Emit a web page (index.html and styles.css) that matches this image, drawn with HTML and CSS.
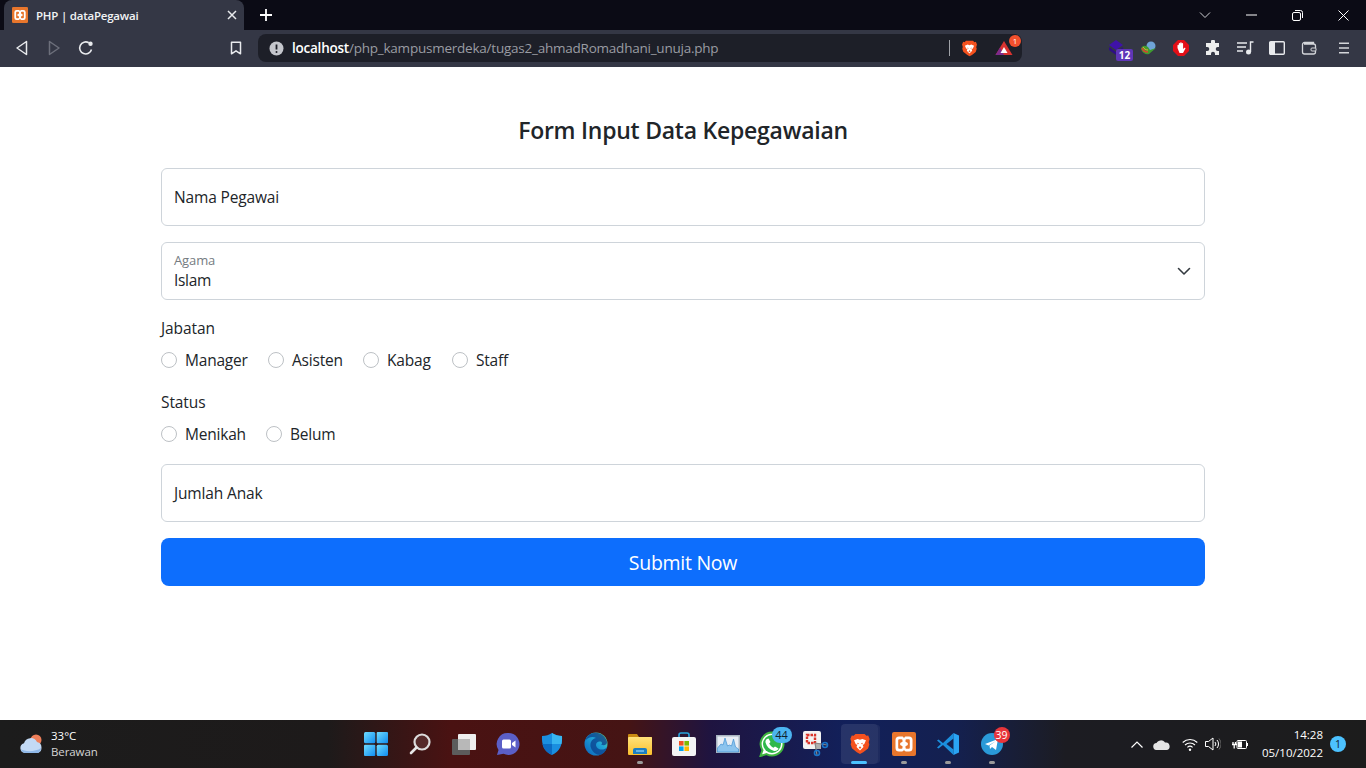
FILE: index.html
```html
<!DOCTYPE html>
<html lang="id">
<head>
<meta charset="utf-8">
<title>PHP | dataPegawai</title>
<link rel="stylesheet" href="styles.css">
</head>
<body>
<svg class="defs" aria-hidden="true">
  <defs>
    <linearGradient id="win" x1="0" y1="0" x2="1" y2="1"><stop offset="0" stop-color="#6fdcff"/><stop offset="1" stop-color="#0f8cf0"/></linearGradient>
    <linearGradient id="edge" x1="0" y1="1" x2="1" y2="0"><stop offset="0" stop-color="#0c5fb8"/><stop offset=".6" stop-color="#1fa6d8"/><stop offset="1" stop-color="#7fe06a"/></linearGradient>
    <linearGradient id="folder" x1="0" y1="0" x2="0" y2="1"><stop offset="0" stop-color="#ffe27a"/><stop offset="1" stop-color="#fbc02d"/></linearGradient>
    <symbol id="xampp" viewBox="0 0 24 24">
      <rect width="24" height="24" rx="2" fill="#e8762c"/>
      <path d="M3.500 8a3.500 3.500 0 0 1 3.500-3.500h3c1 0 1.500.7 2 1.700.5-1 1-1.700 2-1.700h3A3.500 3.500 0 0 1 20.500 8v8a3.500 3.500 0 0 1-3.500 3.500h-3c-1 0-1.500-.7-2-1.700-.5 1-1 1.700-2 1.700H7A3.500 3.500 0 0 1 3.500 16z" fill="#fff"/>
      <path d="M7.200 7.300h2.300a1 1 0 0 1 1 1v1.400l-2.300 1.200v2.200l2.300 1.200v1.400a1 1 0 0 1-1 1H7.200a1 1 0 0 1-1-1V8.300a1 1 0 0 1 1-1z" fill="#e8762c"/>
      <path d="M16.800 7.300h-2.300a1 1 0 0 0-1 1v1.400l2.300 1.200v2.200l-2.300 1.200v1.400a1 1 0 0 0 1 1h2.300a1 1 0 0 0 1-1V8.300a1 1 0 0 0-1-1z" fill="#e8762c"/>
    </symbol>
    <symbol id="brave" viewBox="0 0 24 24">
      <path d="M7 1h10l2 2 2-.4 1.500 3.900-1 3.600.7 2.400-1.400 4.300-5.300 4.300L12 23l-3.500-2.100-5.300-4.300-1.400-4.300.7-2.400-1-3.600L3 2.600 5 3z" fill="#f4511e"/>
      <path d="M5.500 8l4-1.500L12 7.300l2.500-.8 4 1.500-1.800 4-1.700 1 .8 2.200L12 19l-3.800-3.800.8-2.200-1.700-1z" fill="#fff"/>
      <path d="M9 10.500l2 1-1.500 1zM15 10.500l-2 1 1.500 1zM10.500 16l1.500-1.500 1.500 1.500-1.500 1.200z" fill="#f4511e"/>
    </symbol>
  </defs>
</svg>

<header class="browser">
  <div class="tabstrip">
    <div class="tab">
      <svg class="favicon"><use href="#xampp"/></svg>
      <span class="tab-title">PHP | dataPegawai</span>
      <svg class="tab-close" viewBox="0 0 10 10"><path d="M1 1l8 8M9 1l-8 8" stroke="#e8eaed" stroke-width="1.500"/></svg>
    </div>
    <svg class="tab-new" viewBox="0 0 12 12"><path d="M6 0v12M0 6h12" stroke="#fff" stroke-width="1.800"/></svg>
    <div class="fill"></div>
    <div class="winbtn"><svg width="12" height="8" viewBox="0 0 12 8"><path d="M1 1.500l5 5 5-5" fill="none" stroke="#cfd0d4"/></svg></div>
    <div class="winbtn"><svg width="11" height="2" viewBox="0 0 11 2"><path d="M0 1h11" stroke="#fff"/></svg></div>
    <div class="winbtn"><svg width="11" height="11" viewBox="0 0 11 11"><rect x=".5" y="2.500" width="8" height="8" rx="1.500" fill="none" stroke="#fff"/><path d="M3 .5h5.500a2 2 0 0 1 2 2V8" fill="none" stroke="#fff"/></svg></div>
    <div class="winbtn"><svg width="11" height="11" viewBox="0 0 11 11"><path d="M.5.500l10 10M10.500.500l-10 10" stroke="#fff"/></svg></div>
  </div>

  <div class="toolbar">
    <div class="navbtn"><svg width="14" height="16" viewBox="0 0 14 16"><path d="M11.500 1.500v13L2 8z" fill="none" stroke="#e8eaed" stroke-width="1.500" stroke-linejoin="round"/></svg></div>
    <div class="navbtn"><svg width="14" height="16" viewBox="0 0 14 16"><path d="M2.500 1.500v13L12 8z" fill="none" stroke="#6c6f7b" stroke-width="1.500" stroke-linejoin="round"/></svg></div>
    <div class="navbtn"><svg width="16" height="16" viewBox="0 0 16 16"><path d="M13.500 9.500A6 6 0 1 1 10.800 2.800" fill="none" stroke="#e8eaed" stroke-width="1.600"/><circle cx="12.500" cy="3.800" r="2.200" fill="#e8eaed"/></svg></div>
    <div class="fill"></div>
    <div class="navbtn"><svg width="12" height="14" viewBox="0 0 12 14"><path d="M1.500 1.200h9v11.600L6 9.800l-4.500 3z" fill="none" stroke="#e8eaed" stroke-width="1.500" stroke-linejoin="round"/></svg></div>
    <div class="urlbar">
      <svg class="url-info" width="15" height="15" viewBox="0 0 15 15"><circle cx="7.500" cy="7.500" r="7" fill="#c4c6cc"/><path d="M7.500 3.500v5" stroke="#1d1f28" stroke-width="1.800"/><circle cx="7.500" cy="11" r="1" fill="#1d1f28"/></svg>
      <span class="url"><b>localhost</b>/php_kampusmerdeka/tugas2_ahmadRomadhani_unuja.php</span>
      <div class="fill"></div>
      <span class="url-sep"></span>
      <svg class="url-brave"><use href="#brave"/></svg>
      <span class="url-rewards">
        <svg width="18" height="16" viewBox="0 0 18 16"><path d="M9 1l8.500 14H.5z" fill="#d9332f"/><path d="M.5 15L5 7.500 9 15z" fill="#7c2a8c"/><path d="M9 7l3.500 6h-7z" fill="#fff"/></svg>
        <span class="rewards-badge">1</span>
      </span>
    </div>
    <div class="exts">
      <div class="ext">
        <svg width="20" height="18" viewBox="0 0 20 18"><path d="M9 1l7 5-7 5-7-5z" fill="#3f12a8"/><path d="M2 8l7 5 7-5v3l-7 5-7-5z" fill="#2e0e86"/></svg>
        <span class="ext-count">12</span>
      </div>
      <div class="ext"><svg width="18" height="16" viewBox="0 0 18 16"><circle cx="11" cy="6" r="4.500" fill="#6fa4d8"/><path d="M1 9c1-4 4-4 7-2l2 3 6-2-7 6C6 15 2 13 1 9z" fill="#3e9b2f"/><path d="M2 8c1 3 4 4 6 4" fill="none" stroke="#d9442f" stroke-width="1.500"/><path d="M3 7c1 2 3 3 5 3" fill="none" stroke="#e8b12f" stroke-width="1"/></svg></div>
      <div class="ext"><svg width="16" height="16" viewBox="0 0 16 16"><path d="M5 0h6l5 5v6l-5 5H5l-5-5V5z" fill="#e20f17"/><path d="M4.500 8V5.500c0-1 1.300-1 1.300 0V3.800c0-1 1.400-1 1.400 0V3c0-1 1.500-1 1.500 0v.8c0-1 1.400-1 1.400 0V9l1-1c.8-.8 1.700 0 1.200.8L10 13H6.500z" fill="#fff"/></svg></div>
      <div class="ext"><svg width="16" height="16" viewBox="0 0 16 16"><path d="M6 1.500a2 2 0 0 1 4 0V3h4v4h-1.300a2 2 0 0 0 0 4H14v4h-4v-1.300a2 2 0 0 0-4 0V15H1v-4h1.300a2 2 0 0 0 0-4H1V3h5z" fill="#eceded"/></svg></div>
      <div class="ext"><svg width="17" height="14" viewBox="0 0 17 14"><path d="M0 2h10M0 6h9M0 10h6" stroke="#e8eaed" stroke-width="1.400"/><path d="M13.500 11V1h3" fill="none" stroke="#e8eaed" stroke-width="1.400"/><circle cx="11.500" cy="11" r="2.500" fill="#e8eaed"/></svg></div>
      <div class="ext"><svg width="16" height="14" viewBox="0 0 16 14"><rect x=".7" y=".7" width="14.600" height="12.600" rx="1" fill="none" stroke="#e8eaed" stroke-width="1.400"/><rect x="1" y="1" width="5" height="12" fill="#e8eaed"/></svg></div>
      <div class="ext"><svg width="16" height="14" viewBox="0 0 16 14"><path d="M12.500 3V1.500h-9a2 2 0 0 0-2 2V11a2 2 0 0 0 2 2h9a2 2 0 0 0 2-2V5a2 2 0 0 0-2-2H3" fill="none" stroke="#d4d6da" stroke-width="1.300"/><rect x="10" y="7" width="5" height="3" rx="1" fill="#343745" stroke="#d4d6da"/></svg></div>
      <div class="ext ext-menu"><svg width="10" height="12" viewBox="0 0 10 12"><path d="M0 1.200h10M0 6h10M0 10.800h10" stroke="#d4d6da" stroke-width="1.500"/></svg></div>
    </div>
  </div>
</header>

<main class="page">
  <form class="form">
    <h3 class="form-title">Form Input Data Kepegawaian</h3>

    <div class="field"><span class="field-text">Nama Pegawai</span></div>

    <div class="field select">
      <div class="select-body">
        <span class="float-label">Agama</span>
        <span class="select-value">Islam</span>
      </div>
      <svg width="16" height="16" viewBox="0 0 16 16"><path d="M2.500 5.500L8 11l5.500-5.500" fill="none" stroke="#343a40" stroke-width="1.600" stroke-linecap="round" stroke-linejoin="round"/></svg>
    </div>

    <div class="group">
      <div class="group-label">Jabatan</div>
      <div class="radios">
        <label class="radio r-manager"><span class="dot"></span>Manager</label>
        <label class="radio r-asisten"><span class="dot"></span>Asisten</label>
        <label class="radio r-kabag"><span class="dot"></span>Kabag</label>
        <label class="radio"><span class="dot"></span>Staff</label>
      </div>
    </div>

    <div class="group">
      <div class="group-label">Status</div>
      <div class="radios">
        <label class="radio r-menikah"><span class="dot"></span>Menikah</label>
        <label class="radio"><span class="dot"></span>Belum</label>
      </div>
    </div>

    <div class="field last"><span class="field-text">Jumlah Anak</span></div>

    <button class="submit" type="button">Submit Now</button>
  </form>
</main>

<footer class="taskbar">
  <div class="weather">
    <svg width="28" height="22" viewBox="0 0 28 22"><circle cx="17" cy="7" r="5.500" fill="#ee7f5a"/><path d="M6 20a5 5 0 0 1-1-9.800A7 7 0 0 1 18 9a5.500 5.500 0 0 1 4.500 5.500A5.500 5.500 0 0 1 19 20z" fill="#c3daf5"/><path d="M2 16c3 3 15 3 20-1a5.500 5.500 0 0 1-3 5H6a5 5 0 0 1-4-4z" fill="#8fb8e8"/></svg>
    <div class="weather-text"><span class="temp">33°C</span><span class="cond">Berawan</span></div>
  </div>

  <div class="apps">
    <div class="app"><svg width="24" height="24" viewBox="0 0 24 24"><rect width="11.300" height="11.300" rx="1.500" fill="url(#win)"/><rect x="12.700" width="11.300" height="11.300" rx="1" fill="url(#win)"/><rect y="12.700" width="11.300" height="11.300" rx="1" fill="url(#win)"/><rect x="12.700" y="12.700" width="11.300" height="11.300" rx="1.500" fill="url(#win)"/></svg></div>
    <div class="app"><svg width="22" height="22" viewBox="0 0 22 22"><circle cx="13" cy="9" r="7.500" fill="#5a3030" fill-opacity=".8" stroke="#dcdcdc" stroke-width="2.200"/><path d="M7.500 14.500L2 20" stroke="#e6e6e6" stroke-width="2.600" stroke-linecap="round"/></svg></div>
    <div class="app"><svg width="24" height="22" viewBox="0 0 24 22"><rect x="6" y="1" width="18" height="16" rx="1" fill="#eeeeee"/><rect y="6" width="18" height="16" rx="1" fill="#5c5c5c"/><rect x="6" y="6" width="12" height="11" fill="#b8b8b8"/></svg></div>
    <div class="app"><svg width="24" height="24" viewBox="0 0 24 24"><path d="M12.500 1a11 11 0 1 1-5 20.800L1 23l1.500-5A11 11 0 0 1 12.500 1z" fill="#5b5fc7"/><rect x="6" y="7.500" width="9" height="9" rx="1.500" fill="#fff"/><path d="M16 11l3.500-2.500v7L16 13z" fill="#fff"/></svg></div>
    <div class="app"><svg width="24" height="24" viewBox="0 0 24 24"><path d="M12 1c3 2 6 3 10 3 .5 9-2 15.500-10 19C4 19.500 1.500 13 2 4c4 0 7-1 10-3z" fill="#1a8fe0"/><path d="M12 1c3 2 6 3 10 3 .2 3 0 5.500-.5 8H12z" fill="#38b6f0"/><path d="M12 12H2.500c1 5 4 8.500 9.500 11z" fill="#0c6cc4"/></svg></div>
    <div class="app"><svg width="24" height="24" viewBox="0 0 24 24"><circle cx="12" cy="12" r="11.500" fill="url(#edge)"/><path d="M23 15c-2 3-6 3-8 2-4-1.500-4-7 0-7.500 3-.5 4 2 2 3 5 2 6-1 6-2.500C22 5 17 .8 12 .8 7 .8 2.500 4 1.500 8.500 4 5 9 4 12 6 7 7 5.500 12 7 16c1.500 4 5 7 9 7 3.500-1 6-4 7-8z" fill="#0b3f8c" fill-opacity=".75"/></svg></div>
    <div class="app"><svg width="24" height="22" viewBox="0 0 24 22"><path d="M0 2a1 1 0 0 1 1-1h8l2 3h13v4H0z" fill="#c98a12"/><rect y="4" width="24" height="18" rx="1" fill="url(#folder)"/><path d="M5 21v-4a2 2 0 0 1 2-2h10a2 2 0 0 1 2 2v4z" fill="#1c7ec2"/><path d="M8 18h8" stroke="#7cc6f0" stroke-width="1.500"/></svg><span class="run"></span></div>
    <div class="app"><svg width="24" height="24" viewBox="0 0 24 24"><path d="M7 6V3a2 2 0 0 1 2-2h6a2 2 0 0 1 2 2v3" fill="none" stroke="#29a3dc" stroke-width="1.600"/><rect y="5" width="24" height="19" rx="2" fill="#f4f4f4"/><rect x="7" y="9" width="4.600" height="4.600" fill="#f25022"/><rect x="12.400" y="9" width="4.600" height="4.600" fill="#7fba00"/><rect x="7" y="14.400" width="4.600" height="4.600" fill="#00a4ef"/><rect x="12.400" y="14.400" width="4.600" height="4.600" fill="#ffb900"/></svg></div>
    <div class="app"><svg width="24" height="18" viewBox="0 0 24 18"><rect width="24" height="18" fill="#a9b4c0"/><rect x="1.500" y="1.500" width="21" height="15" fill="#e8eef5"/><path d="M1.500 13L5 9l2 1 2-7 2.500 8 2-1 2 1 2-7 2 8 3 2v3h-21z" fill="#8cc4ee" stroke="#2f87cc" stroke-width=".6"/></svg></div>
    <div class="app"><svg width="26" height="26" viewBox="0 0 26 26"><path d="M13 1.500a11.500 11.500 0 1 1-5.500 21.600L1.500 25l2-5.800A11.500 11.500 0 0 1 13 1.500z" fill="#fff" stroke="#3fb43f" stroke-width="2"/><circle cx="13" cy="13" r="9" fill="#2fb84a"/><path d="M9.500 7.500l2 3.500-1.300 1.500c1 2 2.300 3.300 4.300 4.300l1.500-1.300 3.500 2c-.5 2-3 3-5 2.300-4-1.300-7-4.300-8-8.300-.3-1.800.5-3.500 3-4z" fill="#fff"/></svg><span class="badge badge-wa">44</span></div>
    <div class="app"><svg width="26" height="26" viewBox="0 0 26 26"><rect y="0" width="18" height="18" rx="2" fill="#f2f2f2"/><path d="M12 12h6v6h-6z" fill="#b0b0b0"/><rect x="4" y="4" width="8" height="8" fill="none" stroke="#d9342b" stroke-width="2.400" stroke-dasharray="2.500 1"/><path d="M12 12l12 2M12 12l2 12" stroke="#888" stroke-width="1.200"/><circle cx="22" cy="14" r="2.500" fill="none" stroke="#1a74c9" stroke-width="1.600"/><circle cx="14" cy="22" r="2.500" fill="none" stroke="#1a74c9" stroke-width="1.600"/></svg></div>
    <div class="app app-active"><svg width="22" height="24"><use href="#brave"/></svg><span class="run run-active"></span></div>
    <div class="app"><svg width="24" height="24"><use href="#xampp"/></svg><span class="run"></span></div>
    <div class="app"><svg width="24" height="24" viewBox="0 0 24 24"><path d="M17.500 1L7 11 2.500 7.500 1 8.500 5 12l-4 3.500 1.500 1L7 13l10.500 10v-5.500L10.500 12l7-5.500z" fill="#1b8fde"/><path d="M17.500 1L23 3.600v16.800L17.500 23z" fill="#2aa4f4"/></svg><span class="run"></span></div>
    <div class="app"><svg width="22" height="22" viewBox="0 0 22 22"><circle cx="11" cy="11" r="11" fill="#2a9ad8"/><path d="M4 11l13-5-2 11-4-3-2 2-.5-3.500L15 8l-7.500 4.500z" fill="#fff"/></svg><span class="badge badge-tg">39</span><span class="run"></span></div>
  </div>

  <div class="tray">
    <div class="tray-icons">
      <svg width="12" height="7" viewBox="0 0 12 7"><path d="M.5 6.500L6 1l5.500 5.500" fill="none" stroke="#fff" stroke-width="1.200"/></svg>
      <svg width="17" height="11" viewBox="0 0 17 11"><path d="M4 11a3.500 3.500 0 0 1-.5-7A5 5 0 0 1 12 3.500 3.800 3.800 0 0 1 13.500 11z" fill="#e5e5e5"/></svg>
      <svg class="tray-wifi" width="16" height="13" viewBox="0 0 16 13"><path d="M.7 4.500a10.500 10.500 0 0 1 14.600 0M3 7a7.200 7.200 0 0 1 10 0M5.400 9.400a3.800 3.800 0 0 1 5.200 0" fill="none" stroke="#fff" stroke-width="1.100"/><circle cx="8" cy="11.800" r="1.200" fill="#fff"/></svg>
      <svg class="tray-sound" width="16" height="14" viewBox="0 0 16 14"><path d="M.5 4.500h3L8 1v12L3.500 9.500h-3z" fill="none" stroke="#fff"/><path d="M10 5a3 3 0 0 1 0 4M12 3a6 6 0 0 1 0 8" fill="none" stroke="#fff"/><path d="M14 1.500a9 9 0 0 1 0 11" fill="none" stroke="#666"/></svg>
      <svg width="17" height="13" viewBox="0 0 17 13"><rect x="6" y="2.500" width="9.500" height="8" rx="1" fill="none" stroke="#fff"/><rect x="7" y="3.500" width="4" height="6" fill="#fff"/><rect x="15.500" y="5" width="1.500" height="3" fill="#fff"/><path d="M1 6.500h5M2 4v2.500M4.500 4v2.500M3.200 7v3.500" stroke="#fff" stroke-width="1.300"/></svg>
    </div>
    <div class="clock"><span>14:28</span><span>05/10/2022</span></div>
    <span class="notif">1</span>
  </div>
</footer>
</body>
</html>
```

FILE: styles.css
```css
* { box-sizing: border-box; }
html, body { margin: 0; height: 100%; }
body {
  display: flex;
  flex-direction: column;
  height: 768px;
  overflow: hidden;
  background: #fff;
  color: #212529;
  font-family: "Open Sans", "Noto Sans", sans-serif;
}
.defs { display: block; width: 0; height: 0; }
.fill { flex: 1; }

/* browser chrome */
.browser { flex: none; height: 67px; }
.tabstrip { display: flex; align-items: center; height: 30px; background: #0b0b15; padding-left: 4px; }
.tab {
  display: flex; align-items: center;
  width: 240px; height: 30px;
  padding: 0 7px 0 8px;
  background: #343745;
  border-radius: 8px 8px 0 0;
}
.favicon { width: 16px; height: 16px; flex: none; }
.tab-title { flex: 1; margin-left: 8px; color: #f1f3f4; font-size: 11.500px; font-weight: 600; letter-spacing: -.22px; }
.tab-close { width: 10px; height: 10px; flex: none; }
.tab-new { width: 12px; height: 12px; margin-left: 16px; }
.winbtn { display: flex; align-items: center; justify-content: center; width: 46px; height: 30px; }

.toolbar { display: flex; align-items: center; height: 37px; padding: 0 6px 1px 6px; background: #343745; }
.navbtn { display: flex; align-items: center; justify-content: center; width: 32px; height: 32px; }
.urlbar {
  display: flex; align-items: center;
  width: 764px; height: 28px;
  margin-left: 6px; padding-left: 11px;
  background: #1d1f28;
  border-radius: 8px;
}
.url { margin-left: 8px; color: #9a9ca3; font-size: 13.500px; letter-spacing: -.23px; white-space: nowrap; }
.url b { color: #fff; font-weight: 600; }
.url-sep { width: 1px; height: 16px; background: #a0a2a8; }
.url-brave { width: 17px; height: 19px; margin: 0 17px 0 11px; }
.url-rewards { position: relative; display: flex; margin-right: 9px; }
.rewards-badge {
  position: absolute; top: -5px; right: -8px;
  width: 12px; height: 12px;
  border-radius: 50%;
  background: #f1502d;
  color: #fff;
  font-size: 8px; line-height: 12px; text-align: center;
}
.exts { display: flex; align-items: center; margin-left: 79px; }
.ext { position: relative; display: flex; align-items: center; justify-content: center; width: 32px; height: 32px; }
.ext-menu { margin-left: 3px; }
.ext-count {
  position: absolute; left: 15px; top: 17px;
  width: 17px; height: 12px;
  background: #5f36b8;
  border-radius: 2px;
  color: #fff;
  font-size: 10px; font-weight: 700; line-height: 12px; text-align: center;
}

/* page */
.page { flex: 1; padding: 49px 161px 0; }
.form { display: flex; flex-direction: column; }
.form-title {
  margin: 0 0 23px;
  font-size: 23px; font-weight: 600; line-height: 29px;
  text-align: center;
  letter-spacing: -.25px;
}
.field {
  display: flex; align-items: center;
  height: 58px;
  margin-bottom: 16px;
  padding: 0 12px;
  border: 1px solid #ced4da;
  border-radius: 6px;
  font-size: 15.500px;
}
.field-text { letter-spacing: -.15px; }
.select { justify-content: space-between; }
.select-body { display: flex; flex-direction: column; padding-bottom: 1px; }
.float-label { color: #757b81; font-size: 13px; line-height: 18px; letter-spacing: -.12px; }
.select-value { font-size: 15.500px; line-height: 22px; letter-spacing: -.3px; }
.group { margin-bottom: 18px; }
.group-label { height: 24px; font-size: 15.500px; line-height: 24px; letter-spacing: -.1px; }
.radios { display: flex; margin-top: 8px; }
.radio { display: flex; align-items: center; height: 24px; font-size: 15.500px; letter-spacing: -.2px; }
.dot { width: 16px; height: 16px; margin-right: 8px; border: 1px solid #bdc1c5; border-radius: 50%; background: #fff; }
.r-manager { width: 107px; }
.r-asisten { width: 95px; }
.r-kabag { width: 89px; }
.r-menikah { width: 105px; }
.field.last { margin-bottom: 16px; }
.submit {
  height: 48px;
  border: 0;
  border-radius: 8px;
  background: #0d6efd;
  color: #fff;
  font: inherit;
  font-size: 19.500px;
  letter-spacing: -.28px;
}

/* taskbar */
.taskbar {
  flex: none;
  display: flex; align-items: center; justify-content: space-between;
  height: 48px;
  background: linear-gradient(90deg, #1c1c1c 0, #1d1a1a 24%, #4a1212 33%, #451414 46%, #1f1440 52%, #12205a 62%, #14204f 70%, #1c1c22 78%, #1c1c1c 100%);
}
.weather { display: flex; align-items: center; width: 353px; padding-left: 19px; }
.weather-text { display: flex; flex-direction: column; margin-left: 4px; font-size: 11.500px; line-height: 16px; }
.temp { color: #fff; }
.cond { color: #d4d4d4; letter-spacing: -.1px; }
.apps { display: flex; }
.app { position: relative; display: flex; align-items: center; justify-content: center; width: 44px; height: 48px; }
.app-active::before {
  content: ""; position: absolute; left: 3px; top: 4px;
  width: 37px; height: 40px;
  border-radius: 4px;
  background: rgba(255,255,255,.09);
  box-shadow: 3px 0 0 -1px rgba(255,255,255,.05);
}
.app-active svg { position: relative; }
.run { position: absolute; left: 19px; top: 41px; width: 6px; height: 2.500px; border-radius: 2px; background: #9a9a9a; }
.run-active { left: 13px; width: 16px; height: 3px; background: #4cc2ff; }
.badge {
  position: absolute;
  border-radius: 9px;
  font-size: 11px; line-height: 16px; text-align: center;
}
.badge-wa { left: 22px; top: 7px; width: 20px; height: 16px; background: #4cb4f0; color: #10202c; }
.badge-tg { left: 24px; top: 7px; width: 16px; height: 16px; background: #e8353a; color: #fff; font-size: 10.500px; }
.tray { display: flex; align-items: center; justify-content: flex-end; width: 352px; }
.tray-icons { display: flex; align-items: center; gap: 10px; margin-right: 14px; }
.tray-wifi { margin-left: 2px; }
.tray-sound { margin-left: -3px; }
.clock { display: flex; flex-direction: column; align-items: flex-end; color: #fff; font-size: 11.500px; line-height: 18px; }
.notif {
  width: 16px; height: 16px;
  margin: 0 20px 0 7px;
  border-radius: 50%;
  background: #4cc2ff;
  color: #10202c;
  font-size: 10.500px; line-height: 16px; text-align: center;
}
```
